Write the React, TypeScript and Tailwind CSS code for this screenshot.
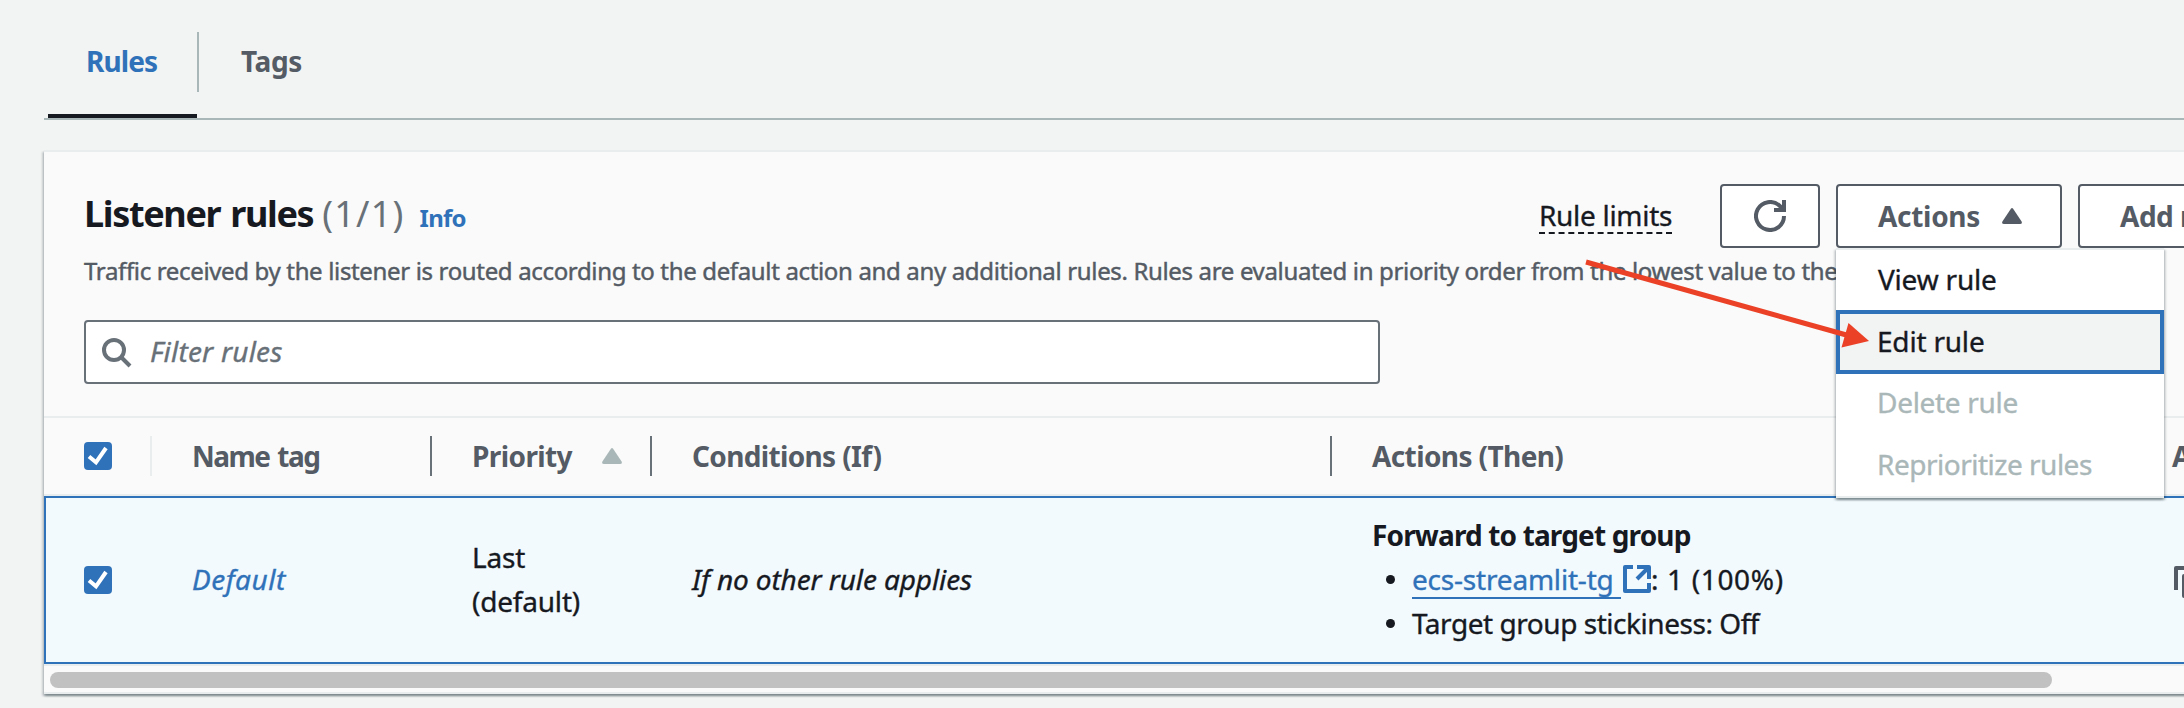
import type { ReactNode } from "react";

function Checkbox() {
  return (
    <span className="block h-7 w-7 rounded-[4px] bg-[#3072b9]">
      <svg viewBox="0 0 28 28" className="h-7 w-7" fill="none" stroke="#fff" strokeWidth="4">
        <path d="M5 14.5 L12 20.3 L22 6" />
      </svg>
    </span>
  );
}

function Triangle({ className }: { className: string }) {
  return (
    <svg viewBox="0 0 20 16" className={`h-4 w-5 shrink-0 ${className}`} fill="currentColor">
      <path d="M8.9 0.8 Q10 -0.6 11.1 0.8 L19.6 13.5 Q20.6 16 18 16 L2 16 Q-0.6 16 0.4 13.5 Z" />
    </svg>
  );
}

function Bullet() {
  return (
    <span className="flex h-11 w-10 items-center pl-[14px]">
      <span className="h-[9px] w-[9px] rounded-full bg-[#16191f]" />
    </span>
  );
}

function Header({ children, divider = "bg-[#687078]" }: { children?: ReactNode; divider?: string }) {
  return (
    <div className="flex items-center pl-10">
      <div className="flex h-11 flex-1 items-center">{children}</div>
      <span className={`h-10 w-0.5 ${divider}`} />
    </div>
  );
}

const columns = "grid grid-cols-[108px_280px_220px_680px_800px_300px]";

export default function App() {
  return (
    <div className="relative h-[708px] w-full overflow-hidden bg-[#f2f3f3] font-['Noto_Sans','Open_Sans',sans-serif] text-[28px] leading-[44px] text-[#16191f]">
      <nav className="ml-11 flex h-[120px] border-b-2 border-[#aab7b8] pl-1 font-bold">
        <div className="flex w-[149px] items-start border-b-4 border-[#16191f] pt-[39px] pl-[38px]">
          <span className="tracking-[-0.9px] text-[#3072b9]">Rules</span>
        </div>
        <span className="mt-8 h-[60px] w-0.5 bg-[#aab7b8]" />
        <span className="mt-[39px] ml-[42px] tracking-[-0.4px] text-[#545b64]">Tags</span>
      </nav>

      <section className="mt-[30px] ml-11 flex h-[544px] w-[2400px] flex-col border-t-2 border-[#eaeded] bg-[#fafafa] shadow-[0_2px_2px_0_rgba(0,28,36,0.3),2px_2px_2px_0_rgba(0,28,36,0.15),-2px_2px_2px_0_rgba(0,28,36,0.15)]">
        <header className="flex h-[264px] shrink-0 flex-col pt-8 pl-10">
          <div className="flex h-16 items-start">
            <div className="flex w-[1454px] items-baseline pt-[6px]">
              <h2 className="text-[36px] leading-[48px] font-bold tracking-[-1.35px] [word-spacing:2px] whitespace-nowrap">Listener rules</h2>
              <span className="ml-[9px] text-[36px] leading-[48px] tracking-[1.2px] text-[#687078]">(1/1)</span>
              <span className="ml-[15px] text-[24px] font-bold tracking-[-0.7px] text-[#3072b9]">Info</span>
            </div>
            <div className="flex w-[182px] pt-[9px]">
              <span className="ml-px h-10 tracking-[-0.3px] whitespace-nowrap [-webkit-text-stroke:0.35px]">
                <span className="block h-[39px]">Rule limits</span>
                <svg className="block h-0.5 w-[133px]" viewBox="0 0 133 2">
                  <path d="M0 1H133" stroke="#16191f" strokeWidth="2" strokeDasharray="6 3.770" />
                </svg>
              </span>
            </div>
            <div className="flex gap-4 font-bold text-[#545b64]">
              <button className="flex h-16 w-[100px] items-center justify-center rounded-[4px] border-2 border-[#545b64] bg-white">
                <svg viewBox="0 0 32 32" className="h-8 w-8" fill="none" stroke="currentColor" strokeWidth="4">
                  <path d="M30 16 A14 14 0 1 1 25.6 5.8 L29 9" />
                  <path d="M20 10 H30 V0" />
                </svg>
              </button>
              <button className="flex h-16 w-[226px] items-center rounded-[4px] border-2 border-[#545b64] bg-white pl-10">
                <span className="w-[124px] pb-px text-left tracking-[-0.3px]">Actions</span>
                <Triangle className="" />
              </button>
              <button className="flex h-16 w-[260px] items-center rounded-[4px] border-2 border-[#545b64] bg-white pb-px pl-10 tracking-[-0.5px] whitespace-nowrap">
                Add rule
              </button>
            </div>
          </div>
          <p className="mt-px h-11 text-[24px] tracking-[-0.345px] whitespace-nowrap text-[#545b64] [-webkit-text-stroke:0.45px]">
            Traffic received by the listener is routed according to the default action and any additional rules. Rules are evaluated in priority order from the lowest value to the
          </p>
          <div className="mt-[27px] flex h-16 w-[1296px] items-center rounded-[4px] border-2 border-[#687078] bg-white pl-4 text-[#687078]">
            <svg viewBox="0 0 32 32" className="mt-[3px] h-8 w-8" fill="none" stroke="currentColor" strokeWidth="4">
              <circle cx="12" cy="12" r="10" />
              <path d="M19 19 L28 28" />
            </svg>
            <span className="ml-4 pb-0.5 tracking-[0.2px] italic [-webkit-text-stroke:0.35px]">Filter rules</span>
          </div>
        </header>

        <div className={`${columns} h-[80px] shrink-0 border-y-2 border-[#eaeded] font-bold text-[#545b64]`}>
          <Header divider="bg-[#eaeded]"><Checkbox /></Header>
          <Header><span className="pb-px tracking-[-1.5px] [word-spacing:2px]">Name tag</span></Header>
          <Header>
            <span className="w-[130px] pb-px tracking-[-0.6px]">Priority</span>
            <Triangle className="text-[#aab7b8]" />
          </Header>
          <Header><span className="pb-px tracking-[-0.65px]">Conditions (If)</span></Header>
          <Header><span className="pb-px tracking-[-0.6px]">Actions (Then)</span></Header>
          <Header>ARN</Header>
        </div>

        <div className={`${columns} h-[168px] shrink-0 items-center border-2 border-[#3072b9] bg-[#f2fafd] pb-0.5`}>
          <div className="-ml-0.5 pt-0.5 pl-10"><Checkbox /></div>
          <div className="-ml-0.5 pl-10 tracking-[0.5px] text-[#3072b9] italic [-webkit-text-stroke:0.35px]">Default</div>
          <div className="-ml-0.5 pl-10 tracking-[-0.2px] [-webkit-text-stroke:0.35px]">Last<br />(default)</div>
          <div className="-ml-0.5 pl-10 tracking-[-0.12px] italic [-webkit-text-stroke:0.35px]">If no other rule applies</div>
          <div className="-ml-0.5 pl-10">
            <div className="font-bold tracking-[-0.85px]">Forward to target group</div>
            <div className="flex h-11 items-start [-webkit-text-stroke:0.35px]">
              <Bullet />
              <span className="h-[42px] w-[209px] border-b-2 border-[#3072b9] tracking-[-0.2px] text-[#3072b9]">ecs-streamlit-tg</span>
              <svg viewBox="0 0 28 28" className="mt-2 ml-0.5 h-7 w-7" fill="none" stroke="#3072b9" strokeWidth="4">
                <path d="M10 2 H2 V26 H26 V18" strokeLinejoin="round" />
                <path d="M14 2 H26 V14" strokeLinejoin="round" />
                <path d="M14 14 L25 3" />
              </svg>
              <span className="tracking-[0.65px]">: 1 (100%)</span>
            </div>
            <div className="flex [-webkit-text-stroke:0.35px]">
              <Bullet />
              <span className="tracking-[-0.46px]">Target group stickiness: Off</span>
            </div>
          </div>
          <div className="-ml-0.5 pt-px pl-10">
            <svg viewBox="0 0 36 36" className="h-9 w-9" fill="none" stroke="#545b64" strokeWidth="4">
              <path d="M4 28 V6 H24" strokeLinejoin="round" />
              <rect x="12" y="14" width="18" height="20" strokeLinejoin="round" />
            </svg>
          </div>
        </div>
        <div className="flex-1 border-y-2 border-[#eaeded] pt-1.5 pl-1.5">
          <div className="h-4 w-[2002px] rounded-full bg-[#c1c1c1]" />
        </div>
      </section>

      <ul className="absolute top-[248px] left-[1836px] h-[250px] w-[328px] border-y-2 border-[#eaeded] bg-white shadow-[0_2px_2px_0_rgba(0,28,36,0.3),2px_2px_2px_0_rgba(0,28,36,0.15),-2px_2px_2px_0_rgba(0,28,36,0.15)] [-webkit-text-stroke:0.35px]">
        <li className="h-[60px] pt-[7px] pl-[42px] tracking-[-0.2px]">View rule</li>
        <li className="h-16 border-4 border-[#3072b9] bg-[#f2f3f3] pt-[5px] pl-[37px] tracking-[-0.2px]">Edit rule</li>
        <li className="h-[62px] pt-[6px] pl-[41px] tracking-[-0.3px] text-[#aab7b8]">Delete rule</li>
        <li className="h-[60px] pt-[6px] pl-[41px] tracking-[-0.5px] text-[#aab7b8]">Reprioritize rules</li>
      </ul>

      <svg className="absolute top-[250px] left-[1580px] h-[110px] w-[300px]" viewBox="1580 250 300 110">
        <path d="M1586 262 L1850 336" stroke="#eb4126" strokeWidth="5" />
        <path d="M1848.500 323 L1869 341 L1841.500 347.500 Z" fill="#eb4126" />
      </svg>
    </div>
  );
}
